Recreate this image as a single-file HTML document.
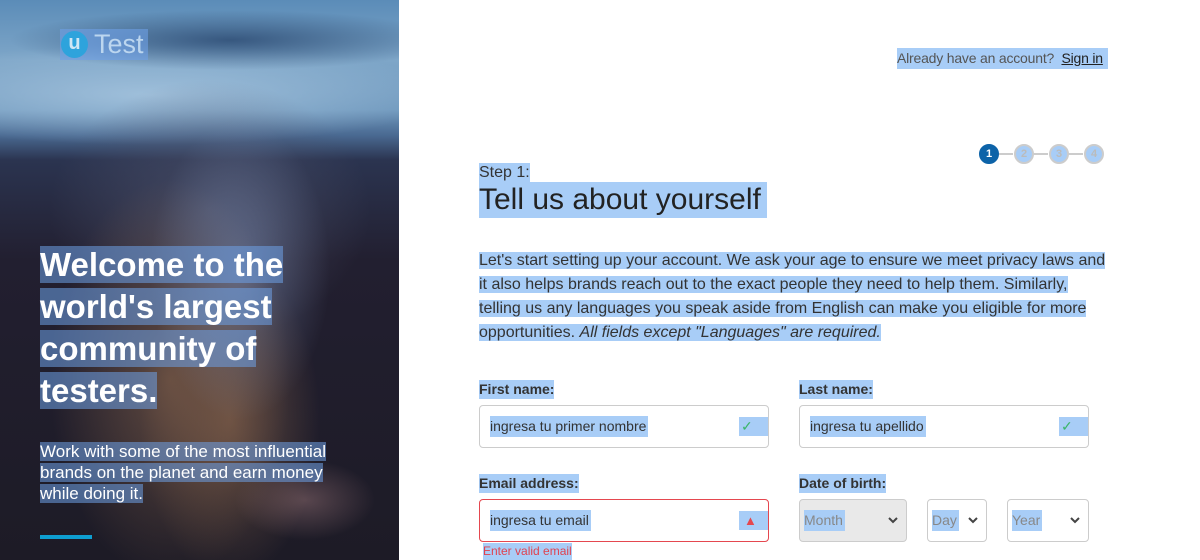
<!DOCTYPE html>
<html><head><meta charset="utf-8"><style>
*{margin:0;padding:0;box-sizing:border-box}
body{width:1200px;height:560px;overflow:hidden;background:#fff;font-family:"Liberation Sans",sans-serif;position:relative}
.left{position:absolute;left:0;top:0;width:399px;height:560px;overflow:hidden;background:#1d1b26}
.bg{position:absolute;inset:0;background:
radial-gradient(ellipse 70px 40px at 305px 500px,rgba(200,150,150,.35),transparent),
radial-gradient(ellipse 90px 150px at 240px 270px,rgba(140,160,200,.45),transparent),
radial-gradient(ellipse 120px 200px at 170px 380px,rgba(150,110,80,.55),transparent),
radial-gradient(ellipse 90px 160px at 230px 420px,rgba(180,130,90,.45),transparent),
radial-gradient(ellipse 160px 130px at 210px 210px,rgba(80,85,110,.7),transparent),
radial-gradient(ellipse 220px 30px at 230px 40px,rgba(40,70,110,.8),transparent),
radial-gradient(ellipse 300px 50px at 150px 95px,rgba(170,200,225,.8),transparent),
linear-gradient(180deg,#5b8cb8 0px,#7ea6c8 60px,#6f98bd 110px,#4a6a92 135px,#2b3450 160px,#221f30 260px,#1d1b26 560px)}
.hl{background:rgba(110,160,230,.55)}
.rh{background:#a8cdf7}
.logo{position:absolute;left:60px;top:29px;height:31px;width:88px;background:rgba(110,160,230,.6)}
.logo .u{position:absolute;left:1px;top:2px;width:27px;height:27px;border-radius:50%;background:#2ea3dc;color:#cfe6f5;font-weight:bold;font-size:20px;text-align:center;line-height:25px}
.logo .t{position:absolute;left:34px;top:0;font-size:27px;color:#bcd6ef;line-height:31px}
h1{position:absolute;left:40px;top:244px;font-size:33px;line-height:42px;color:#fff;font-weight:bold;width:300px}
h1 span,.sub span{box-decoration-break:clone;-webkit-box-decoration-break:clone}
.sub{position:absolute;left:40px;top:441px;font-size:17px;line-height:21px;color:#fff;width:318px}
.bar{position:absolute;left:40px;top:535px;width:52px;height:4px;background:#0e9ed0}
.acc{position:absolute;left:897px;top:48px;height:21px;width:211px;font-size:14px;line-height:21px;color:#555;white-space:nowrap;letter-spacing:-0.2px}
.acc u{color:#222}
.steps{position:absolute;left:979px;top:144px}
.c{position:absolute;top:0;width:20px;height:20px;border-radius:50%;border:2px solid #ccc;background:#a8cdf7;color:#bbb;font-size:11px;font-weight:bold;text-align:center;line-height:16px}
.ln{position:absolute;top:9px;height:2px;background:#ccc;width:16px}
.step{position:absolute;left:479px;top:163px;font-size:16px;line-height:19px;color:#333}
.title{position:absolute;left:479px;top:182px;font-size:30px;line-height:36px;color:#222}
.para{position:absolute;left:479px;top:249px;width:630px;font-size:16px;line-height:24px;color:#333}
.lbl{position:absolute;font-size:14px;font-weight:bold;color:#333;line-height:19px}
.inp{position:absolute;height:43px;border:1px solid #ccc;border-radius:4px;background:#fff}
.inp .v{position:absolute;left:10px;top:10px;font-size:14px;line-height:21px;color:#333;padding-right:2px}
.inp .ic{position:absolute;right:0;top:11px;width:29px;height:19px;background:#a8cdf7;color:#3bb56a;font-size:14px;line-height:19px;padding-left:2px}
.sel .v{color:#888}
.sel svg{position:absolute;right:8px;top:17px}
.err{position:absolute;left:483px;top:543px;font-size:12px;line-height:17px;color:#e0424f}
</style></head><body>
<div class="left"><div class="bg"></div>
<div class="logo"><div class="u">u</div><div class="t">Test</div></div>
<h1><span class="hl">Welcome to the world's largest community of testers.</span></h1>
<div class="sub"><span class="hl">Work with some of the most influential brands on the planet and earn money while doing it.</span></div>
<div class="bar"></div>
</div>
<div class="acc rh">Already have an account?&nbsp; <u>Sign in</u></div>
<div class="steps">
<div class="ln" style="left:18px"></div><div class="ln" style="left:53px"></div><div class="ln" style="left:88px"></div>
<div class="c" style="left:0;background:#0d63a8;border-color:#0d63a8;color:#fff">1</div>
<div class="c" style="left:35px">2</div><div class="c" style="left:70px">3</div><div class="c" style="left:105px">4</div>
</div>
<div class="step rh">Step 1:</div>
<div class="title rh" style="padding-right:6px">Tell us about yourself</div>
<div class="para"><span class="rh" style="box-decoration-break:clone;-webkit-box-decoration-break:clone">Let's start setting up your account. We ask your age to ensure we meet privacy laws and it also helps brands reach out to the exact people they need to help them. Similarly, telling us any languages you speak aside from English can make you eligible for more opportunities. <i>All fields except "Languages" are required.</i></span></div>
<div class="lbl rh" style="left:479px;top:380px">First name:</div>
<div class="lbl rh" style="left:799px;top:380px">Last name:</div>
<div class="inp" style="left:479px;top:405px;width:290px"><span class="v rh">ingresa tu primer nombre</span><span class="ic">✓</span></div>
<div class="inp" style="left:799px;top:405px;width:290px"><span class="v rh">ingresa tu apellido</span><span class="ic">✓</span></div>
<div class="lbl rh" style="left:479px;top:474px">Email address:</div>
<div class="lbl rh" style="left:799px;top:474px">Date of birth:</div>
<div class="inp" style="left:479px;top:499px;width:290px;border-color:#e5474f"><span class="v rh">ingresa tu email</span><span class="ic" style="color:#e5474f;font-size:13px;padding-left:5px">▲</span></div>
<div class="inp sel" style="left:799px;top:499px;width:108px;background:#e9e9e9"><span class="v rh" style="left:4px">Month</span><svg width="10" height="7" viewBox="0 0 10 7"><path d="M1 1l4 4 4-4" stroke="#444" stroke-width="2" fill="none"/></svg></div>
<div class="inp sel" style="left:927px;top:499px;width:60px"><span class="v rh" style="left:4px">Day</span><svg width="10" height="7" viewBox="0 0 10 7"><path d="M1 1l4 4 4-4" stroke="#444" stroke-width="2" fill="none"/></svg></div>
<div class="inp sel" style="left:1007px;top:499px;width:82px"><span class="v rh" style="left:4px">Year</span><svg width="10" height="7" viewBox="0 0 10 7"><path d="M1 1l4 4 4-4" stroke="#444" stroke-width="2" fill="none"/></svg></div>
<div class="err rh">Enter valid email</div>
</body></html>
